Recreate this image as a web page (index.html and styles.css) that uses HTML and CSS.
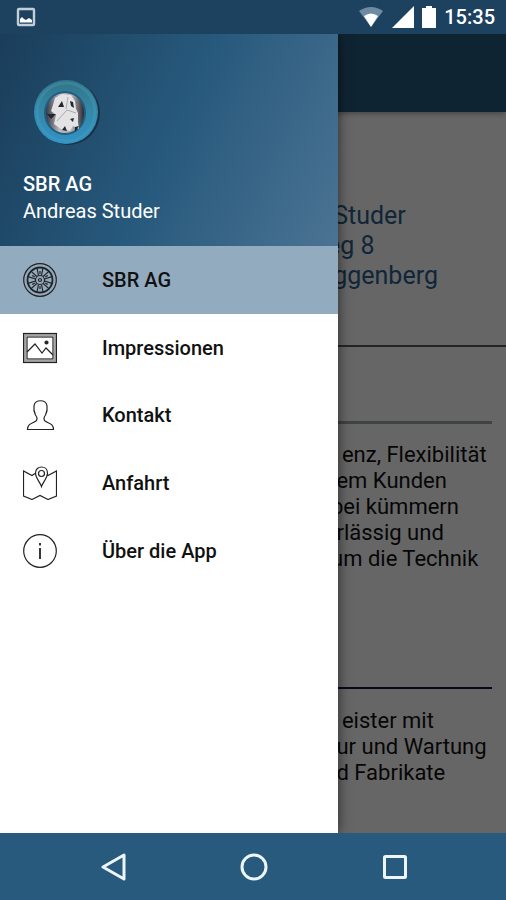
FILE: index.html
```html
<!DOCTYPE html>
<html lang="de">
<head>
    <meta charset="UTF-8">
    <meta name="viewport" content="width=device-width, initial-scale=1.0">
    <title>SBR AG</title>
    <link rel="stylesheet" href="styles.css">
</head>
<body>

    <header class="status-bar">
        <svg class="status-picture" width="20" height="20" viewBox="0 0 20 20">
            <rect x="2" y="2" width="16" height="16" rx="1" fill="none" stroke="#c3cfd8" stroke-width="2.4"/>
            <path d="M4 15.500V12L6 10L8 12L10 13L13 11L16 13V15.500Z" fill="#fff"/>
        </svg>
        <svg width="26" height="22" viewBox="0 0 26 22">
            <path d="M1 5Q13 -3 25 5L13 21Z" fill="#6d8ba3"/>
            <path d="M6 10Q13 5 20 10L13 21Z" fill="#fff"/>
        </svg>
        <svg width="22" height="22" viewBox="0 0 22 22">
            <path d="M22 0V22H0Z" fill="#fff"/>
        </svg>
        <svg width="14" height="22" viewBox="0 0 14 22">
            <path d="M4 0H10V2H14V22H0V2H4Z" fill="#fff"/>
        </svg>
        <span class="clock">15:35</span>
    </header>

    <div class="screen">
        <main class="page">
            <div class="app-bar"></div>
            <section class="address">
                <p>&nbsp;Studer<br>eg 8<br>&nbsp;ggenberg</p>
            </section>
            <section class="about">
                <p>&nbsp;&nbsp;enz, Flexibilität<br>&nbsp;em Kunden<br>bei kümmern<br>&nbsp;rlässig und<br>um die Technik</p>
            </section>
            <section class="service">
                <p>&nbsp;&nbsp;eister mit<br>&nbsp;ur und Wartung<br>&nbsp;d Fabrikate</p>
            </section>
        </main>
        <div class="scrim"></div>

        <aside class="drawer">
            <div class="profile">
                <svg class="logo" width="72" height="72" viewBox="0 0 72 72">
                    <defs>
                        <linearGradient id="ring" x1="0" y1="0" x2="0" y2="1">
                            <stop offset="0" stop-color="#327486"/>
                            <stop offset="0.5" stop-color="#3489a9"/>
                            <stop offset="1" stop-color="#3192c5"/>
                        </linearGradient>
                        <linearGradient id="hub" x1="0" y1="0" x2="1" y2="0">
                            <stop offset="0" stop-color="#343842"/>
                            <stop offset="0.35" stop-color="#b9babf"/>
                            <stop offset="0.7" stop-color="#aaa"/>
                            <stop offset="1" stop-color="#292a30"/>
                        </linearGradient>
                    </defs>
                    <circle cx="37" cy="36" r="32" fill="#1b3048"/>
                    <circle cx="35" cy="35" r="32" fill="url(#ring)"/>
                    <circle cx="35" cy="35" r="29" fill="none" stroke="#4aa5c2" stroke-width="3" opacity="0.3"/>
                    <ellipse cx="34" cy="36" rx="21" ry="22" fill="#205c83"/>
                    <ellipse cx="34" cy="36" rx="19" ry="20" fill="url(#hub)"/>
                    <path d="M24 21L31 17L40 18L44 24L45 32L47 36L47 45L48 52L42 49L39 54L30 52L23 47L25 38L20 34L22 28Z" fill="#e3e3e5"/>
                    <path d="M27 30L31 24L33 30ZM39 24L42 25L43 31L40 29ZM16 37L25 37L20 42ZM39 42L43 41L42 45ZM31 53L34 49L36 54ZM44 50L48 49L44 55Z" fill="#24262b"/>
                    <path d="M26 44L36 33L45 36M37 20L35 32" fill="none" stroke="#aaa" stroke-width="1"/>
                </svg>
                <strong>SBR AG</strong>
                <span>Andreas Studer</span>
            </div>

            <nav class="menu">
                <a class="active" href="#sbr">
                    <svg viewBox="0 0 34 34">
                        <circle cx="17" cy="17" r="16.300"/>
                        <circle cx="17" cy="17" r="12.500" stroke-width="1.800"/>
                        <circle cx="17" cy="17" r="4.500"/>
                        <circle cx="17" cy="17" r="1.500"/>
                        <g id="spoke">
                            <path d="M15.500 12.500L14 5M18.500 12.500L20 5M17 8V11"/>
                        </g>
                        <use href="#spoke" transform="rotate(60 17 17)"/>
                        <use href="#spoke" transform="rotate(120 17 17)"/>
                        <use href="#spoke" transform="rotate(180 17 17)"/>
                        <use href="#spoke" transform="rotate(240 17 17)"/>
                        <use href="#spoke" transform="rotate(300 17 17)"/>
                    </svg>
                    SBR AG
                </a>
                <a href="#impressionen">
                    <svg viewBox="0 0 34 34">
                        <rect x="2" y="4" width="30" height="26" stroke="#a5a5a5" stroke-width="2"/>
                        <rect x="0.500" y="2.500" width="33" height="29"/>
                        <rect x="4" y="6" width="26" height="22"/>
                        <path d="M4 21L12 13L19 22L23 17L30 24"/>
                        <circle cx="23.500" cy="11.500" r="1.500" fill="#222"/>
                    </svg>
                    Impressionen
                </a>
                <a href="#kontakt">
                    <svg viewBox="0 0 34 34">
                        <path d="M4.500 31.500H30.500C30.500 25 25 25.500 22 23C20 21 21 19 22.500 17C24 14 24.500 11 24 8C23.500 1 11.500 1 11 8C10.500 11 11 14 12.500 17C14 19 15 21 13 23C10 25.500 4.500 25 4.500 31.500Z"/>
                    </svg>
                    Kontakt
                </a>
                <a href="#anfahrt">
                    <svg viewBox="0 0 34 34">
                        <path d="M12 7.500L9 9.500L0.500 5V30L9 33.500L17 29.500L25 33.500L33.500 30V5L25 9.500L24 8.500"/>
                        <path d="M18.500 20.500C17 16 12.500 12 12.500 7C12.500 -1 24.500 -1 24.500 7C24.500 12 20 16 18.500 20.500Z"/>
                        <circle cx="18.500" cy="7.500" r="3"/>
                    </svg>
                    Anfahrt
                </a>
                <a href="#app">
                    <svg viewBox="0 0 34 34">
                        <circle cx="17" cy="17" r="16.300"/>
                        <path d="M17 14V25M17 9V11.500" stroke-width="1.800"/>
                    </svg>
                    Über die App
                </a>
            </nav>
        </aside>
    </div>

    <footer class="nav-bar">
        <button type="button" aria-label="Zurück">
            <svg width="28" height="28" viewBox="0 0 28 28"><path d="M25 2V26L4 14Z"/></svg>
        </button>
        <button type="button" aria-label="Start">
            <svg width="28" height="28" viewBox="0 0 28 28"><circle cx="14" cy="14" r="12"/></svg>
        </button>
        <button type="button" aria-label="Übersicht">
            <svg width="28" height="28" viewBox="0 0 28 28"><rect x="3.500" y="3.500" width="21" height="21" rx="1"/></svg>
        </button>
    </footer>

</body>
</html>
```
FILE: styles.css
```css
body {
    font-family: Roboto, sans-serif;
    margin: 0;
    height: 100vh;
    display: flex;
    flex-direction: column;
    background-color: #fff;
}

p {
    margin: 0;
}

.status-bar {
    height: 34px;
    display: flex;
    align-items: center;
    gap: 8px;
    padding: 0 11px 0 16px;
    background-color: #1d4260;
    color: #fff;
}

.status-picture {
    margin-right: auto;
}

.clock {
    font-size: 20px;
    font-weight: 500;
    line-height: 24px;
}

.screen {
    position: relative;
    flex: 1;
    min-height: 0;
    overflow: hidden;
}

.page {
    height: 100%;
    background-color: #fff;
    white-space: nowrap;
    color: #111;
}

.app-bar {
    height: 78px;
    background-color: #275a7d;
    box-shadow: 0 2px 5px rgba(0, 0, 0, 0.3);
}

.address {
    padding: 89px 0 54px 327px;
    border-bottom: 2px solid #555d62;
    color: #2b5f8c;
    font-size: 25px;
    line-height: 30px;
}

.about,
.service {
    margin-right: 14px;
    font-size: 22px;
    line-height: 26px;
}

.about {
    padding-top: 74px;
}

.about p {
    border-top: 3px solid #a0a7ab;
    padding: 18px 0 115px 331px;
}

.service p {
    border-top: 2px solid #1a1050;
    padding: 19px 0 0 331px;
}

.scrim {
    position: absolute;
    inset: 0;
    background-color: rgba(0, 0, 0, 0.6);
}

.drawer {
    position: absolute;
    top: 0;
    bottom: 0;
    left: 0;
    width: 338px;
    background-color: #fff;
    box-shadow: 0 0 12px rgba(0, 0, 0, 0.6);
}

.profile {
    box-sizing: border-box;
    height: 212px;
    display: flex;
    flex-direction: column;
    padding: 43px 23px 0 23px;
    background: linear-gradient(115deg, #1a3d5a 0%, #27597c 50%, #4b7393 100%);
    color: #fff;
    font-size: 20px;
    line-height: 27px;
}

.profile strong {
    font-weight: 500;
}

.logo {
    margin: 0 0 22px 8px;
}

.menu {
    height: 338px;
    display: grid;
    grid-template-rows: repeat(5, 1fr);
}

.menu a {
    display: flex;
    align-items: center;
    gap: 45px;
    padding: 1px 23px 0 23px;
    color: #111;
    font-size: 20px;
    font-weight: 500;
    text-decoration: none;
}

.menu .active {
    background-color: #93abbf;
}

.menu svg {
    width: 34px;
    height: 34px;
    fill: none;
    stroke: #222;
    stroke-width: 1.2;
}

.nav-bar {
    height: 67px;
    display: grid;
    grid-template-columns: repeat(3, 1fr);
    padding: 0 41px 0 43px;
    background-color: #275a7d;
}

.nav-bar button {
    display: flex;
    align-items: center;
    justify-content: center;
    padding: 0;
    border: none;
    background: none;
    cursor: pointer;
}

.nav-bar svg {
    fill: none;
    stroke: #eef5fc;
    stroke-width: 3;
    stroke-linejoin: round;
}
```
